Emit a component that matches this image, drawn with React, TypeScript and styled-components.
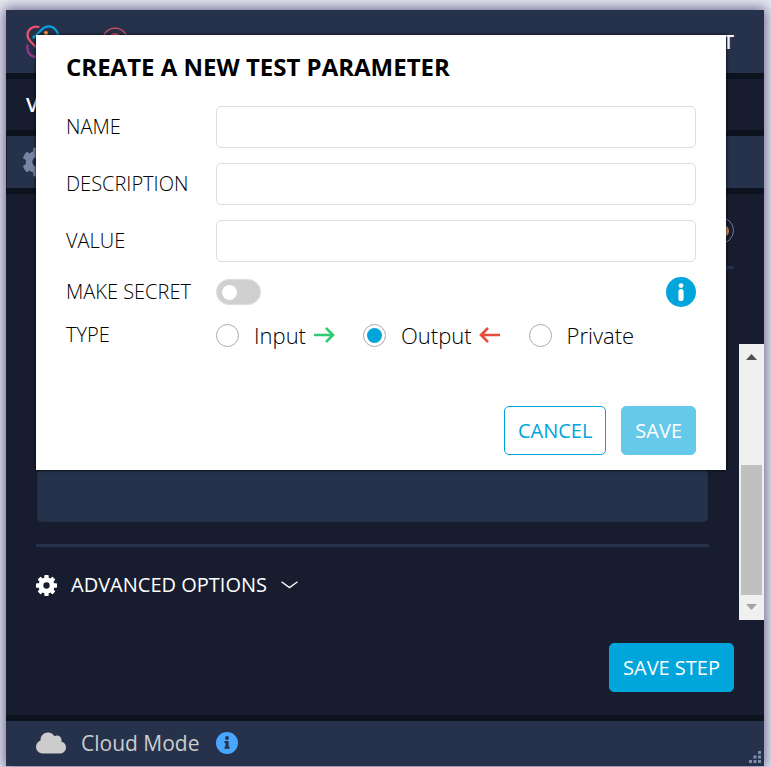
import React from "react";
import styled, { createGlobalStyle } from "styled-components";
import { FaCloud, FaCog } from "react-icons/fa";

const navy = "#26324b";
const ink = "#171d2f";
const seam = "#0c121e";
const blue = "#00a5db";

const GlobalStyle = createGlobalStyle`
  * { box-sizing: border-box; }
  body { margin: 0; background: #e6e9f1; font-family: "Open Sans", sans-serif; }
  button, input { font-family: inherit; margin: 0; }
`;

const Page = styled.div`
  display: flex;
  min-height: 100vh;
  padding: 10px 7px 1px 6px;
  overflow: hidden;
`;

const Window = styled.div`
  position: relative;
  flex: 1;
  display: flex;
  flex-direction: column;
  background: ${ink};
  box-shadow: 0 0 12px 2px rgba(72, 58, 112, 0.75);
`;

const Bar = styled.div<{ $height: number; $tone: string }>`
  display: flex;
  align-items: center;
  height: ${(p) => p.$height}px;
  padding: 0 30px 0 20px;
  background: ${(p) => p.$tone};
  color: #fff;
  font-size: 20px;
  font-weight: 600;
`;

const TopBar = styled(Bar)`
  gap: 42px;
`;

const BarEnd = styled.span`
  margin-left: auto;
`;

const ToolBar = styled(Bar)`
  padding-left: 15px;
  border-left: 1px solid ${ink};
`;

const Seam = styled.div`
  height: 6px;
  background: ${seam};
`;

const Body = styled.main`
  flex: 1;
  display: flex;
  flex-direction: column;
`;

const StepHeader = styled.div`
  display: flex;
  justify-content: flex-end;
  margin: 0 30px;
  padding: 23px 0 22px;
  border-bottom: 3px solid ${navy};
`;

const Avatar = styled.span`
  display: grid;
  place-items: center;
  width: 27px;
  height: 27px;
  border: 1px solid #6f7b9b;
  border-radius: 50%;

  &::before {
    content: "";
    width: 17px;
    height: 14px;
    border-radius: 50%;
    background: #d58a58;
  }
`;

const Scroller = styled.div`
  display: flex;
  align-items: stretch;
  justify-content: space-between;
  height: 276px;
  margin-top: 75px;
`;

const ScrollContent = styled.div`
  flex: 1;
  display: flex;
  flex-direction: column;
  justify-content: flex-end;
  padding: 0 30px 21px;
`;

const StepField = styled.input`
  height: 52px;
  margin: 0 1px;
  border: 1px solid #222c43;
  border-radius: 4px;
  background: ${navy};
  color: #fff;
`;

const Rule = styled.hr`
  width: 100%;
  height: 3px;
  margin: 22px 0 24px;
  border: 0;
  background: ${navy};
`;

const Advanced = styled.button`
  display: flex;
  align-items: center;
  align-self: flex-start;
  gap: 14px;
  padding: 0;
  border: 0;
  background: none;
  color: #fff;
  font-size: 20px;
  line-height: 28px;
`;

const ScrollTrack = styled.div`
  display: flex;
  flex-direction: column;
  align-items: center;
  justify-content: flex-end;
  width: 25px;
  background: #f0f0f0;
`;

const ScrollThumb = styled.div`
  width: 21px;
  height: 130px;
  background: #c0c0c0;
`;

const ScrollArrow = styled.svg`
  width: 25px;
  height: 25px;
  display: block;
  flex: none;

  &:first-child { margin-bottom: auto; }
`;

const StepActions = styled.div`
  display: flex;
  justify-content: flex-end;
  padding: 23px 30px;
`;

const Button = styled.button<{ $kind: "solid" | "outline" | "faded" }>`
  height: 49px;
  padding: 0 13px;
  border: 1px solid ${(p) => (p.$kind === "faded" ? "#66c9e9" : blue)};
  border-radius: 5px;
  background: ${(p) => ({ solid: blue, outline: "#fff", faded: "#66c9e9" })[p.$kind]};
  color: ${(p) => (p.$kind === "outline" ? blue : "#fff")};
  font-size: 20px;
`;

const Footer = styled.footer`
  position: relative;
  display: flex;
  align-items: center;
  height: 45px;
  padding: 0 30px 2px;
  background: ${navy};
  color: #ccc;
  font-size: 21px;

  svg { flex: none; }
`;

const ModeName = styled.span`
  margin: 0 16px 0 15px;
`;

const ResizeGrip = styled.svg`
  position: absolute;
  right: 3px;
  bottom: 3px;
`;

const Modal = styled.form`
  position: absolute;
  top: 25px;
  left: 30px;
  right: 38px;
  display: flex;
  flex-direction: column;
  gap: 15px;
  padding: 14px 30px 15px;
  background: #fff;
  color: #000;
  box-shadow: 0 0 3px #000;
`;

const Title = styled.h1`
  margin: 0 0 7px;
  font-size: 24px;
  font-weight: 700;
  line-height: 35px;
`;

const Row = styled.div<{ $height: number }>`
  display: grid;
  grid-template-columns: 150px 1fr;
  align-items: center;
  height: ${(p) => p.$height}px;
`;

const Label = styled.label`
  font-size: 20px;
  font-weight: 300;
  line-height: 26px;
`;

const TextBox = styled.input`
  width: 100%;
  height: 42px;
  padding: 0 12px;
  border: 1px solid #ddd;
  border-radius: 5px;
  background: #fff;
  font-size: 20px;
`;

const SecretControls = styled.div`
  display: flex;
  align-items: center;
  justify-content: space-between;
`;

const Toggle = styled.input`
  appearance: none;
  display: flex;
  align-items: center;
  width: 45px;
  height: 26px;
  padding: 0 5px;
  border: 1px solid #ddd;
  border-radius: 13px;
  background: #d0d0d0;

  &::before {
    content: "";
    width: 15px;
    height: 15px;
    border-radius: 50%;
    background: #fff;
  }

  &:checked { background: ${blue}; justify-content: flex-end; }
`;

const InfoButton = styled.button`
  display: flex;
  padding: 0;
  border: 0;
  background: none;
`;

const Options = styled.div`
  display: flex;
  align-items: center;
  gap: 28px;
`;

const Option = styled.label`
  display: flex;
  align-items: center;
  font-size: 22px;
  font-weight: 300;
  line-height: 26px;

  svg { margin-left: 7px; }
`;

const Radio = styled.input`
  appearance: none;
  display: grid;
  place-items: center;
  flex: none;
  width: 23px;
  height: 23px;
  border: 1px solid #aaa;
  border-radius: 50%;
  background: #fff;

  && { margin-right: 15px; }

  &:checked::before {
    content: "";
    width: 15px;
    height: 15px;
    border-radius: 50%;
    background: ${blue};
  }
`;

const ModalActions = styled.div`
  display: flex;
  justify-content: flex-end;
  gap: 15px;
  margin-top: 43px;
`;

const teeth = [0, 45, 90, 135, 180, 225, 270, 315];

const Cog = ({ size }: { size: number }) => (
  <svg width={size} height={size} viewBox="-12 -12 24 24" fill="currentColor" aria-hidden>
    <circle r="6.4" fill="none" stroke="currentColor" strokeWidth="5.6" />
    {teeth.map((a) => (
      <rect key={a} x="-2.5" y="-12" width="5" height="5" rx="0.8" transform={`rotate(${a})`} />
    ))}
  </svg>
);

const InfoIcon = ({ size, disc, mark }: { size: number; disc: string; mark: string }) => (
  <svg width={size} height={size} viewBox="0 0 30 30" aria-hidden>
    <circle cx="15" cy="15" r="15" fill={disc} />
    <circle cx="15" cy="8.6" r="2.4" fill={mark} />
    <rect x="12.4" y="12" width="5.2" height="12" rx="2.6" fill={mark} />
  </svg>
);

const SerifInfoIcon = () => (
  <svg width="22" height="22" viewBox="0 0 22 22" aria-hidden>
    <circle cx="11" cy="11" r="11" fill="#48a6ff" />
    <circle cx="11" cy="6" r="1.9" fill={navy} />
    <path d="M8.5 9H12.6V14.8H13.6V16.8H8.5V14.8H9.5V11H8.5Z" fill={navy} />
  </svg>
);

const Arrow = ({ color, left }: { color: string; left?: boolean }) => (
  <svg width="22" height="18" viewBox="0 0 22 18" fill="none" stroke={color} strokeWidth="2.6" aria-hidden>
    <path d={left ? "M21 9H2M9 2L2 9L9 16" : "M1 9H20M13 2L20 9L13 16"} />
  </svg>
);

const Logo = () => (
  <svg width="34" height="34" viewBox="0 0 34 34" fill="none" strokeWidth="2.2" strokeLinecap="round" aria-hidden>
    <path d="M12.5 2C7 0.5 1.5 4.5 1.5 10C1.5 13 3 15 5 17L18 30" stroke="#f0506e" />
    <path d="M8 12.5L15.5 4.8C20 0.2 26 0.6 29.5 4.5C33 8.5 32.5 13 29 16.5L17 28" stroke="#0a9fd8" />
    <path d="M1.5 20.5C0.5 27 4 31.5 9 31.8C13 32 15 30 17 28" stroke="#9b3793" />
    <circle cx="8" cy="12" r="1.8" fill="#0a9fd8" />
    <circle cx="20" cy="8" r="2" fill="#f29a4a" />
  </svg>
);

const RecordIcon = () => (
  <svg width="26" height="30" viewBox="0 0 26 30" fill="none" aria-hidden>
    <circle cx="13" cy="13.5" r="12.4" stroke="#d9525e" strokeWidth="1.2" />
    <circle cx="13" cy="13.5" r="7.5" fill="#d9525e" />
  </svg>
);

const fields = ["Name", "Description", "Value"];

export default function App() {
  return (
    <>
      <GlobalStyle />
      <Page>
        <Window>
          <TopBar as="header" $height={63} $tone={navy}>
            <Logo />
            <RecordIcon />
            <BarEnd>T</BarEnd>
          </TopBar>
          <Seam />
          <Bar $height={51} $tone={ink}>V</Bar>
          <Seam />
          <ToolBar $height={52} $tone={navy}>
            <FaCog size={30} color="#7784a4" />
          </ToolBar>
          <Seam />
          <Body>
            <StepHeader>
              <Avatar />
            </StepHeader>
            <Scroller>
              <ScrollContent>
                <StepField aria-label="Step value" />
                <Rule />
                <Advanced type="button">
                  <Cog size={21} />
                  ADVANCED OPTIONS
                  <svg width="17" height="8" viewBox="0 0 17 8" fill="none" stroke="#fff" strokeWidth="1.4" aria-hidden>
                    <path d="M0.5 0.8L8.5 6.6L16.5 0.8" />
                  </svg>
                </Advanced>
              </ScrollContent>
              <ScrollTrack aria-hidden>
                <ScrollArrow viewBox="0 0 25 25">
                  <path d="M7 16H18L12.5 10Z" fill="#505050" />
                </ScrollArrow>
                <ScrollThumb />
                <ScrollArrow viewBox="0 0 25 25">
                  <path d="M7 9H18L12.5 15Z" fill="#a3a3a3" />
                </ScrollArrow>
              </ScrollTrack>
            </Scroller>
            <StepActions>
              <Button type="button" $kind="solid">SAVE STEP</Button>
            </StepActions>
          </Body>
          <Seam />
          <Footer>
            <FaCloud size={30} color="#ccc" />
            <ModeName>Cloud Mode</ModeName>
            <SerifInfoIcon />
            <ResizeGrip width="12" height="12" fill="#7f8bab" aria-hidden>
              <path d="M9 0h3v3h-3zM9 4.5h3v3h-3zM9 9h3v3h-3zM4.5 4.5h3v3h-3zM4.5 9h3v3h-3zM0 9h3v3h-3z" />
            </ResizeGrip>
          </Footer>
          <Modal>
            <Title>CREATE A NEW TEST PARAMETER</Title>
            {fields.map((name) => (
              <Row key={name} $height={42}>
                <Label htmlFor={name}>{name.toUpperCase()}</Label>
                <TextBox id={name} type="text" />
              </Row>
            ))}
            <Row $height={30}>
              <Label htmlFor="secret">MAKE SECRET</Label>
              <SecretControls>
                <Toggle id="secret" type="checkbox" role="switch" />
                <InfoButton type="button" aria-label="About secrets">
                  <InfoIcon size={30} disc={blue} mark="#fff" />
                </InfoButton>
              </SecretControls>
            </Row>
            <Row $height={26} role="radiogroup" aria-labelledby="type-label">
              <Label as="span" id="type-label">TYPE</Label>
              <Options>
                <Option>
                  <Radio type="radio" name="type" />
                  Input
                  <Arrow color="#2ecc71" />
                </Option>
                <Option>
                  <Radio type="radio" name="type" defaultChecked />
                  Output
                  <Arrow color="#e74c3c" left />
                </Option>
                <Option>
                  <Radio type="radio" name="type" />
                  Private
                </Option>
              </Options>
            </Row>
            <ModalActions>
              <Button type="button" $kind="outline">CANCEL</Button>
              <Button type="submit" $kind="faded">SAVE</Button>
            </ModalActions>
          </Modal>
        </Window>
      </Page>
    </>
  );
}
